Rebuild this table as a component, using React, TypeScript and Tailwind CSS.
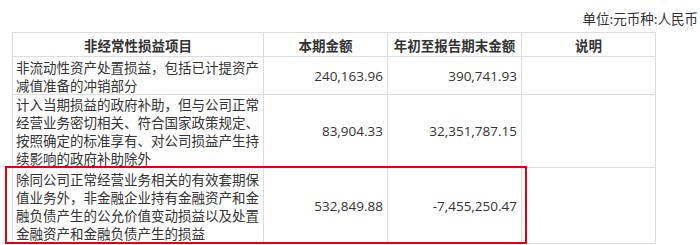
const rows = [
  {
    item: '非流动性资产处置损益，包括已计提资产减值准备的冲销部分',
    cur: '240,163.96',
    ytd: '390,741.93',
    h: 'h-[38px]',
  },
  {
    item: '计入当期损益的政府补助，但与公司正常经营业务密切相关、符合国家政策规定、按照确定的标准享有、对公司损益产生持续影响的政府补助除外',
    cur: '83,904.33',
    ytd: '32,351,787.15',
    h: 'h-[73px]',
  },
  {
    item: '除同公司正常经营业务相关的有效套期保值业务外，非金融企业持有金融资产和金融负债产生的公允价值变动损益以及处置金融资产和金融负债产生的损益',
    cur: '532,849.88',
    ytd: '-7,455,250.47',
    h: 'h-[76px]',
  },
];

export default function App() {
  return (
    <div className="relative w-[700px] h-[245px] overflow-hidden bg-white text-[#333] font-['Noto_Sans_CJK_SC',sans-serif]">
      <div className="h-[32px] flex items-end justify-end pr-[2px] pb-[5px] text-[13.5px] leading-[18px]">
        单位:元币种:人民币
      </div>
      <table className="ml-[12px] w-[643px] border-collapse table-fixed text-[13.5px] leading-[18px]">
        <colgroup>
          <col className="w-[251px]" />
          <col className="w-[124px]" />
          <col className="w-[134px]" />
          <col className="w-[134px]" />
        </colgroup>
        <thead>
          <tr className="h-[24px]">
            <th className="border border-[#ddd] font-bold text-center p-0">非经常性损益项目</th>
            <th className="border border-[#ddd] font-bold text-center p-0">本期金额</th>
            <th className="border border-[#ddd] font-bold text-center p-0">年初至报告期末金额</th>
            <th className="border border-[#ddd] font-bold text-center p-0">说明</th>
          </tr>
        </thead>
        <tbody>
          {rows.map((r) => (
            <tr key={r.cur} className={r.h}>
              <td className="border border-[#ddd] px-[3px] py-0 align-middle">{r.item}</td>
              <td className="border border-[#ddd] px-[4px] py-0 text-right align-middle font-['Open_Sans',sans-serif]">{r.cur}</td>
              <td className="border border-[#ddd] px-[4px] py-0 text-right align-middle font-['Open_Sans',sans-serif]">{r.ytd}</td>
              <td className="border border-[#ddd] p-0"></td>
            </tr>
          ))}
        </tbody>
      </table>
      <div className="absolute left-[5px] top-[166px] w-[522px] h-[78px] border-2 border-[#e60012]" />
    </div>
  );
}
